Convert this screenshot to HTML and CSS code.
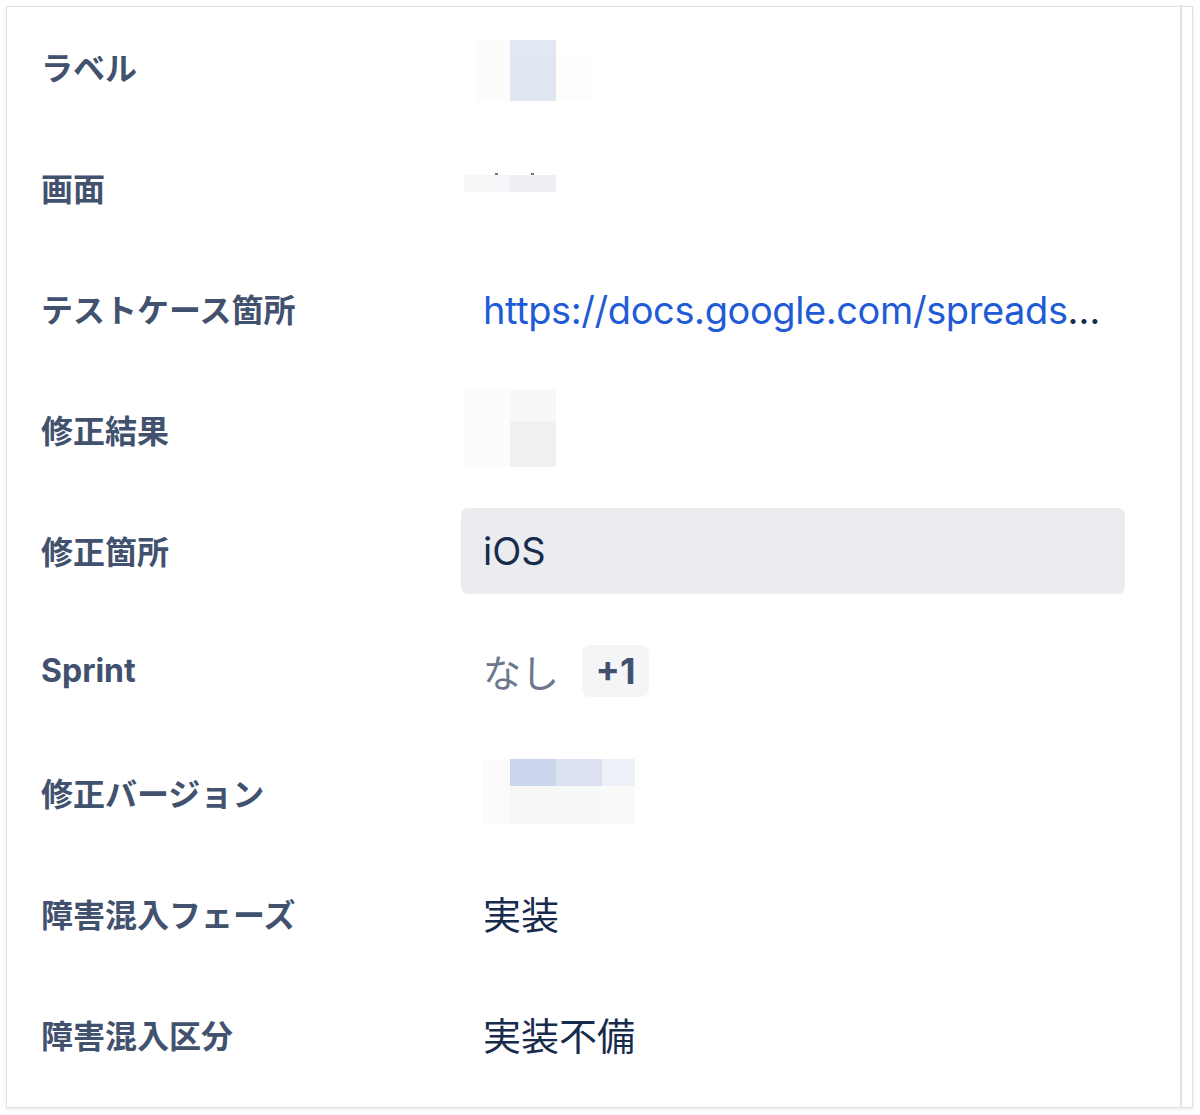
FILE: index.html
```html
<!DOCTYPE html>
<html lang="ja">
  <head>
    <meta charset="UTF-8" />
    <meta name="viewport" content="width=device-width, initial-scale=1.0" />
    <title>詳細</title>
    <link rel="stylesheet" href="styles.css">
  </head>
  <body>
    <div class="panel">
      <div class="fields">
        <div class="field">
          <div class="field-label">ラベル</div>
          <div class="field-value"><div class="blur blur-label"></div></div>
        </div>

        <div class="field">
          <div class="field-label">画面</div>
          <div class="field-value"><div class="blur blur-screen"></div></div>
        </div>

        <div class="field">
          <div class="field-label">テストケース箇所</div>
          <div class="field-value">
            <div class="value-url"><a class="value-link" href="#">https://docs.google.com/spreads</a><span class="ellipsis">…</span></div>
          </div>
        </div>

        <div class="field">
          <div class="field-label">修正結果</div>
          <div class="field-value"><div class="blur blur-result"></div></div>
        </div>

        <div class="field">
          <div class="field-label">修正箇所</div>
          <div class="field-value"><div class="value-box">iOS</div></div>
        </div>

        <div class="field">
          <div class="field-label">Sprint</div>
          <div class="field-value">
            <div class="sprint">
              <span class="muted">なし</span>
              <span class="more">+1</span>
            </div>
          </div>
        </div>

        <div class="field">
          <div class="field-label">修正バージョン</div>
          <div class="field-value"><div class="blur blur-version"></div></div>
        </div>

        <div class="field">
          <div class="field-label">障害混入フェーズ</div>
          <div class="field-value"><div class="value-text">実装</div></div>
        </div>

        <div class="field">
          <div class="field-label">障害混入区分</div>
          <div class="field-value"><div class="value-text">実装不備</div></div>
        </div>
      </div>
    </div>
  </body>
</html>
```

FILE: styles.css
```css
body {
  margin: 0;
  padding: 6px;
  background-color: #fff;
  font-family: Inter, "Noto Sans CJK JP", sans-serif;
  color: #172b4d;
}
.panel {
  display: flex;
  width: 1185px;
  height: 1100px;
  border: 1px solid #e2e2e4;
  box-shadow: 0 1px 3px rgba(0, 0, 0, 0.1);
  background-color: #fff;
}
.fields {
  width: 1173px;
  margin-top: -2px;
  border-right: 2px solid #e1e2e7;
}
.field {
  display: grid;
  grid-template-columns: 454px 664px;
  height: 121px;
  align-items: center;
}
.field-label {
  padding-left: 34px;
  font-size: 32px;
  font-weight: 700;
  color: #42526e;
  white-space: nowrap;
}
.field-value {
  display: flex;
  align-items: center;
  min-width: 0;
}
.value-text {
  padding: 0 22px;
  font-size: 38px;
}
.value-url {
  margin-top: 4px;
  padding: 0 14px 0 22px;
  font-size: 38px;
  letter-spacing: -0.4px;
  white-space: nowrap;
  overflow: hidden;
}
.value-link {
  color: #1f5bd6;
  text-decoration: none;
}
.ellipsis {
  color: #172b4d;
}
.value-box {
  flex: 1;
  height: 86px;
  line-height: 86px;
  margin-top: 2px;
  padding: 0 22px;
  font-size: 38px;
  background-color: #ebecf0;
  border-radius: 7px;
}
.sprint {
  display: flex;
  align-items: center;
  gap: 23px;
  padding: 0 22px;
}
.muted {
  font-size: 38px;
  color: #6b778c;
}
.more {
  display: flex;
  align-items: center;
  justify-content: center;
  width: 67px;
  height: 52px;
  font-size: 36px;
  font-weight: 700;
  color: #42526e;
  background-color: #f4f5f7;
  border-radius: 8px;
}

/* pixelated placeholders for hidden values */
.blur {
  background-repeat: no-repeat;
}
.blur-label {
  width: 115px;
  height: 61px;
  margin-left: 16px;
  margin-top: 10px;
  background-image:
    linear-gradient(#e2e8f4 16px, #dfe5f1 16px),
    linear-gradient(#fcfcfc, #fcfcfc),
    linear-gradient(#fdfdfd, #fdfdfd);
  background-position: 33px 0, 0 0, 79px 16px;
  background-size: 46px 61px, 33px 61px, 36px 45px;
}
.blur-screen {
  width: 92px;
  height: 19px;
  margin-left: 3px;
  margin-bottom: 8px;
  background-image:
    linear-gradient(#6f7389, #6f7389),
    linear-gradient(#6f7389, #6f7389),
    linear-gradient(#f5f6f8, #f5f6f8),
    linear-gradient(#eeeff2, #eeeff2);
  background-position: 31px 0, 67px 0, 0 2px, 46px 2px;
  background-size: 3px 2px, 3px 2px, 46px 17px, 46px 17px;
}
.blur-result {
  width: 92px;
  height: 77px;
  margin-left: 3px;
  background-image:
    linear-gradient(#fcfcfc, #fcfcfc),
    linear-gradient(#f8f8f8 31px, #f0f1f3 31px);
  background-position: 0 0, 46px 0;
  background-size: 46px 77px, 46px 77px;
}
.blur-version {
  width: 152px;
  height: 65px;
  margin-left: 22px;
  background-image:
    linear-gradient(#fbfbfb, #fbfbfb),
    linear-gradient(#cbd5ec 27px, #f7f7f8 27px),
    linear-gradient(#dce2f1 27px, #f7f8f8 27px),
    linear-gradient(#eef1f7 27px, #fafafa 27px);
  background-position: 0 0, 27px 0, 73px 0, 119px 0;
  background-size: 27px 65px, 46px 65px, 46px 65px, 33px 65px;
}
```
